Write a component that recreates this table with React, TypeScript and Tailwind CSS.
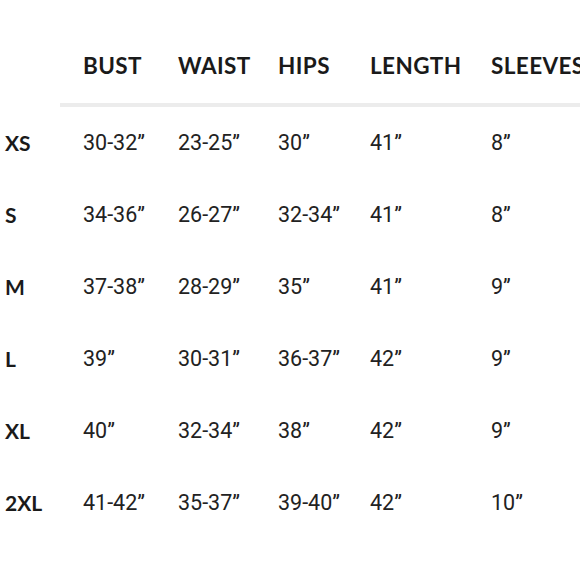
const cols = ["w-[83px]", "w-[95px]", "w-[100px]", "w-[92px]", "w-[121px]", "w-[89px]"];
const headers = ["BUST", "WAIST", "HIPS", "LENGTH", "SLEEVES"];
const rows: [string, string[]][] = [
  ["XS", ["30-32\u201D", "23-25\u201D", "30\u201D", "41\u201D", "8\u201D"]],
  ["S", ["34-36\u201D", "26-27\u201D", "32-34\u201D", "41\u201D", "8\u201D"]],
  ["M", ["37-38\u201D", "28-29\u201D", "35\u201D", "41\u201D", "9\u201D"]],
  ["L", ["39\u201D", "30-31\u201D", "36-37\u201D", "42\u201D", "9\u201D"]],
  ["XL", ["40\u201D", "32-34\u201D", "38\u201D", "42\u201D", "9\u201D"]],
  ["2XL", ["41-42\u201D", "35-37\u201D", "39-40\u201D", "42\u201D", "10\u201D"]],
];

export default function App() {
  return (
    <div className="w-[580px] h-[580px] bg-white overflow-hidden text-[#1a1a1a]">
      <div className="pt-[51px]">
        <div className="flex h-[30px] items-center whitespace-nowrap">
          <div className={`${cols[0]} shrink-0`} />
          {headers.map((h, i) => (
            <div
              key={h}
              className={`${cols[i + 1]} shrink-0 text-[22.5px] font-bold tracking-[0.4px] [font-family:Lato,sans-serif]`}
            >
              {h}
            </div>
          ))}
        </div>
        <div className="mt-[22px] ml-[60px] h-[4px] bg-[#ececec]" />
        {rows.map(([size, vals]) => (
          <div key={size} className="flex h-[72px] items-center whitespace-nowrap">
            <div className={`${cols[0]} shrink-0 pl-[5px] text-[21px] font-bold [font-family:Lato,sans-serif]`}>
              {size}
            </div>
            {vals.map((v, i) => (
              <div
                key={i}
                className={`${cols[i + 1]} shrink-0 text-[21.5px] [font-family:Roboto,sans-serif] text-[#222]`}
              >
                {v}
              </div>
            ))}
          </div>
        ))}
      </div>
    </div>
  );
}
